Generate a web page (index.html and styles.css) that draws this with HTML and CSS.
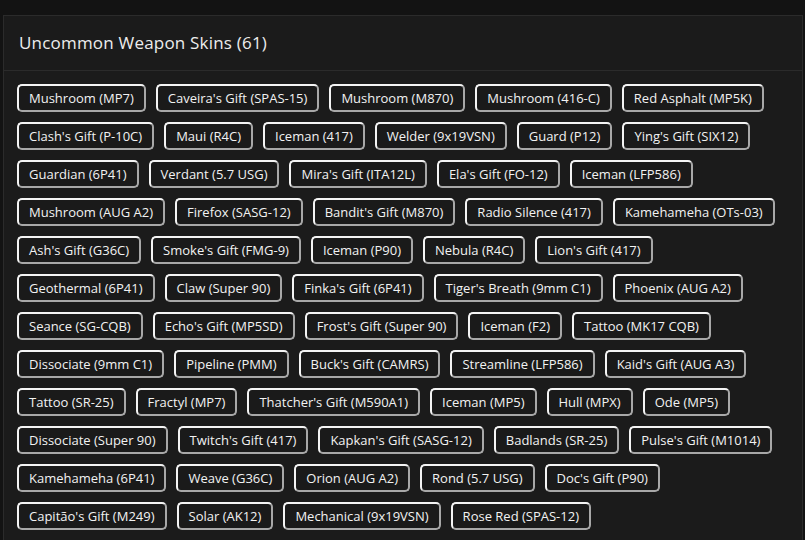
FILE: index.html
```html
<!DOCTYPE html>
<html lang="en">
<head>
<meta charset="UTF-8">
<meta name="viewport" content="width=device-width, initial-scale=1.0">
<title>Uncommon Weapon Skins</title>
<link rel="stylesheet" href="styles.css">
</head>
<body>
<div class="panel">
  <div class="panel-header">
    <h2>Uncommon Weapon Skins (61)</h2>
  </div>
  <div class="skin-list">
    <span class="skin">Mushroom (MP7)</span>
    <span class="skin">Caveira's Gift (SPAS-15)</span>
    <span class="skin">Mushroom (M870)</span>
    <span class="skin">Mushroom (416-C)</span>
    <span class="skin">Red Asphalt (MP5K)</span>
    <span class="skin">Clash's Gift (P-10C)</span>
    <span class="skin">Maui (R4C)</span>
    <span class="skin">Iceman (417)</span>
    <span class="skin">Welder (9x19VSN)</span>
    <span class="skin">Guard (P12)</span>
    <span class="skin">Ying's Gift (SIX12)</span>
    <span class="skin">Guardian (6P41)</span>
    <span class="skin">Verdant (5.7 USG)</span>
    <span class="skin">Mira's Gift (ITA12L)</span>
    <span class="skin">Ela's Gift (FO-12)</span>
    <span class="skin">Iceman (LFP586)</span>
    <span class="skin">Mushroom (AUG A2)</span>
    <span class="skin">Firefox (SASG-12)</span>
    <span class="skin">Bandit's Gift (M870)</span>
    <span class="skin">Radio Silence (417)</span>
    <span class="skin">Kamehameha (OTs-03)</span>
    <span class="skin">Ash's Gift (G36C)</span>
    <span class="skin">Smoke's Gift (FMG-9)</span>
    <span class="skin">Iceman (P90)</span>
    <span class="skin">Nebula (R4C)</span>
    <span class="skin">Lion's Gift (417)</span>
    <span class="skin">Geothermal (6P41)</span>
    <span class="skin">Claw (Super 90)</span>
    <span class="skin">Finka's Gift (6P41)</span>
    <span class="skin">Tiger's Breath (9mm C1)</span>
    <span class="skin">Phoenix (AUG A2)</span>
    <span class="skin">Seance (SG-CQB)</span>
    <span class="skin">Echo's Gift (MP5SD)</span>
    <span class="skin">Frost's Gift (Super 90)</span>
    <span class="skin">Iceman (F2)</span>
    <span class="skin">Tattoo (MK17 CQB)</span>
    <span class="skin">Dissociate (9mm C1)</span>
    <span class="skin">Pipeline (PMM)</span>
    <span class="skin">Buck's Gift (CAMRS)</span>
    <span class="skin">Streamline (LFP586)</span>
    <span class="skin">Kaid's Gift (AUG A3)</span>
    <span class="skin">Tattoo (SR-25)</span>
    <span class="skin">Fractyl (MP7)</span>
    <span class="skin">Thatcher's Gift (M590A1)</span>
    <span class="skin">Iceman (MP5)</span>
    <span class="skin">Hull (MPX)</span>
    <span class="skin">Ode (MP5)</span>
    <span class="skin">Dissociate (Super 90)</span>
    <span class="skin">Twitch's Gift (417)</span>
    <span class="skin">Kapkan's Gift (SASG-12)</span>
    <span class="skin">Badlands (SR-25)</span>
    <span class="skin">Pulse's Gift (M1014)</span>
    <span class="skin">Kamehameha (6P41)</span>
    <span class="skin">Weave (G36C)</span>
    <span class="skin">Orion (AUG A2)</span>
    <span class="skin">Rond (5.7 USG)</span>
    <span class="skin">Doc's Gift (P90)</span>
    <span class="skin">Capitão's Gift (M249)</span>
    <span class="skin">Solar (AK12)</span>
    <span class="skin">Mechanical (9x19VSN)</span>
    <span class="skin">Rose Red (SPAS-12)</span>
  </div>
</div>
</body>
</html>
```

FILE: styles.css
```css
/* Weapon skins panel */
body {
  font-family: 'Open Sans', sans-serif;
  margin: 0;
  padding: 15px 2px 0 3px;
  background-color: #131313;
  color: #f2f2f2;
}
.panel {
  background-color: #1b1b1b;
  border: 1px solid #2b2b2b;
}
.panel-header {
  padding: 16px 15px;
  border-bottom: 1px solid #2b2b2b;
}
.panel-header h2 {
  margin: 0;
  font-size: 17px;
  font-weight: 500;
  letter-spacing: 0.2px;
  line-height: 22px;
  color: #ededed;
}
.skin-list {
  display: flex;
  flex-wrap: wrap;
  gap: 10px;
  padding: 13px;
}
.skin {
  font-size: 13px;
  line-height: 16px;
  padding: 4px 10px;
  border: 2px solid;
  border-color: #f4f4f4 #a8a8a8 #a8a8a8 #f4f4f4;
  border-radius: 5px;
  background-color: #1a1a1a;
  white-space: nowrap;
}
```
